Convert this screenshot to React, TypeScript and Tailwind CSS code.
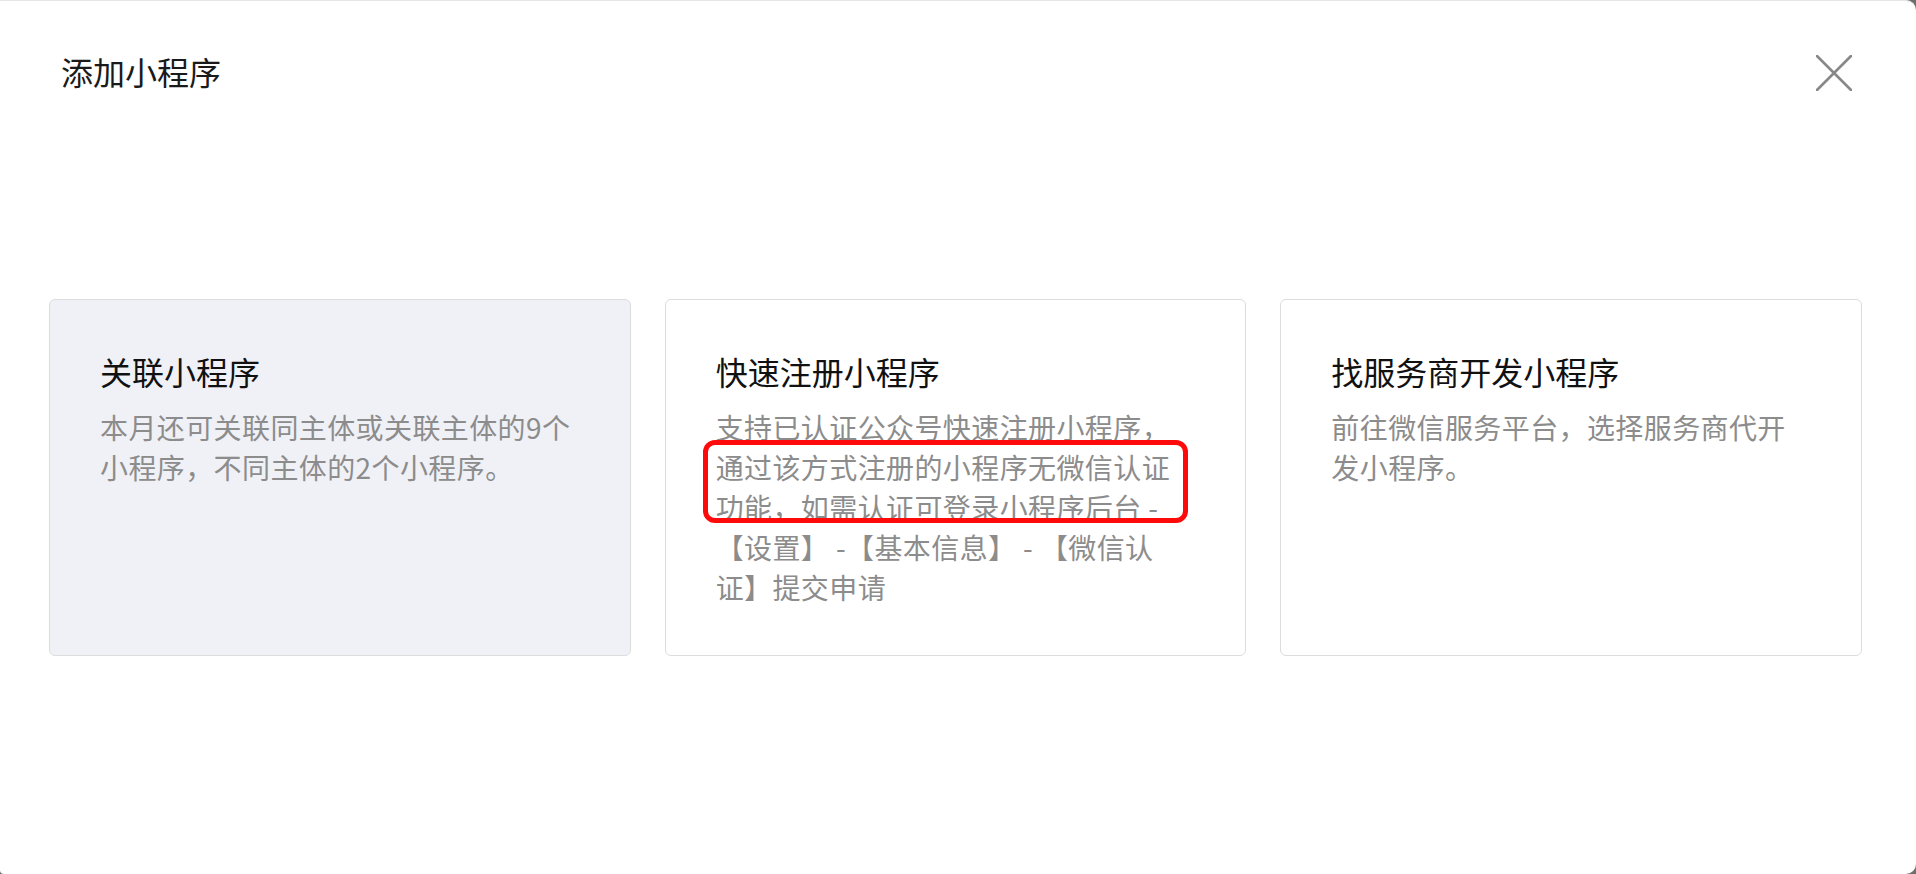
import React from 'react';

type Option = {
    title: string;
    desc: string;
    active?: boolean;
    highlight?: boolean;
};

const options: Option[] = [
    {
        title: '关联小程序',
        desc: '本月还可关联同主体或关联主体的9个小程序，不同主体的2个小程序。',
        active: true,
    },
    {
        title: '快速注册小程序',
        desc: '支持已认证公众号快速注册小程序，通过该方式注册的小程序无微信认证功能，如需认证可登录小程序后台 - 【设置】 -【基本信息】 - 【微信认证】提交申请',
        highlight: true,
    },
    {
        title: '找服务商开发小程序',
        desc: '前往微信服务平台，选择服务商代开发小程序。',
    },
];

const CloseIcon: React.FC = () => (
    <svg width="36" height="36" viewBox="0 0 36 36" fill="none">
        <path d="M1 1L35 35M35 1L1 35" stroke="#888888" strokeWidth="2.6" strokeLinecap="round" />
    </svg>
);

const App: React.FC = () => {
    return (
        <div className="w-full h-[874px] bg-[#6e6e6e] font-['Noto_Sans_CJK_SC',sans-serif]">
            <div className="h-full bg-white rounded-tr-[10px] rounded-br-[10px] rounded-bl-[4px] border-t border-[#e6e6e6]">
                {/* header */}
                <div className="flex items-start justify-between pl-[61px] pr-[64px] pt-[48px]">
                    <h1 className="text-[32px] leading-[44px] text-[#1a1a1a] font-normal">添加小程序</h1>
                    <button className="mt-[6px] w-[36px] h-[36px] flex items-center justify-center cursor-pointer">
                        <CloseIcon />
                    </button>
                </div>

                {/* options */}
                <div className="grid grid-cols-3 gap-[34px] pl-[49px] pr-[54px] mt-[206px]">
                    {options.map((opt) => (
                        <div
                            key={opt.title}
                            className={`relative border border-[#dcdcdc] rounded-[6px] pl-[50px] pr-[54px] pt-[49px] pb-[48px] cursor-pointer ${
                                opt.active ? 'bg-[#f0f1f6]' : 'bg-white'
                            }`}
                        >
                            <div className="text-[32px] leading-[44px] text-[#111111]">{opt.title}</div>
                            <div className="mt-[14px] text-[28px] leading-[40px] tracking-[0.4px] text-[#8c8c8c]">{opt.desc}</div>
                            {opt.highlight && (
                                <div className="absolute left-[37px] top-[140px] w-[485px] h-[83px] border-[5px] border-[#ff0a0a] rounded-[12px] pointer-events-none" />
                            )}
                        </div>
                    ))}
                </div>
            </div>
        </div>
    );
};

export default App;
